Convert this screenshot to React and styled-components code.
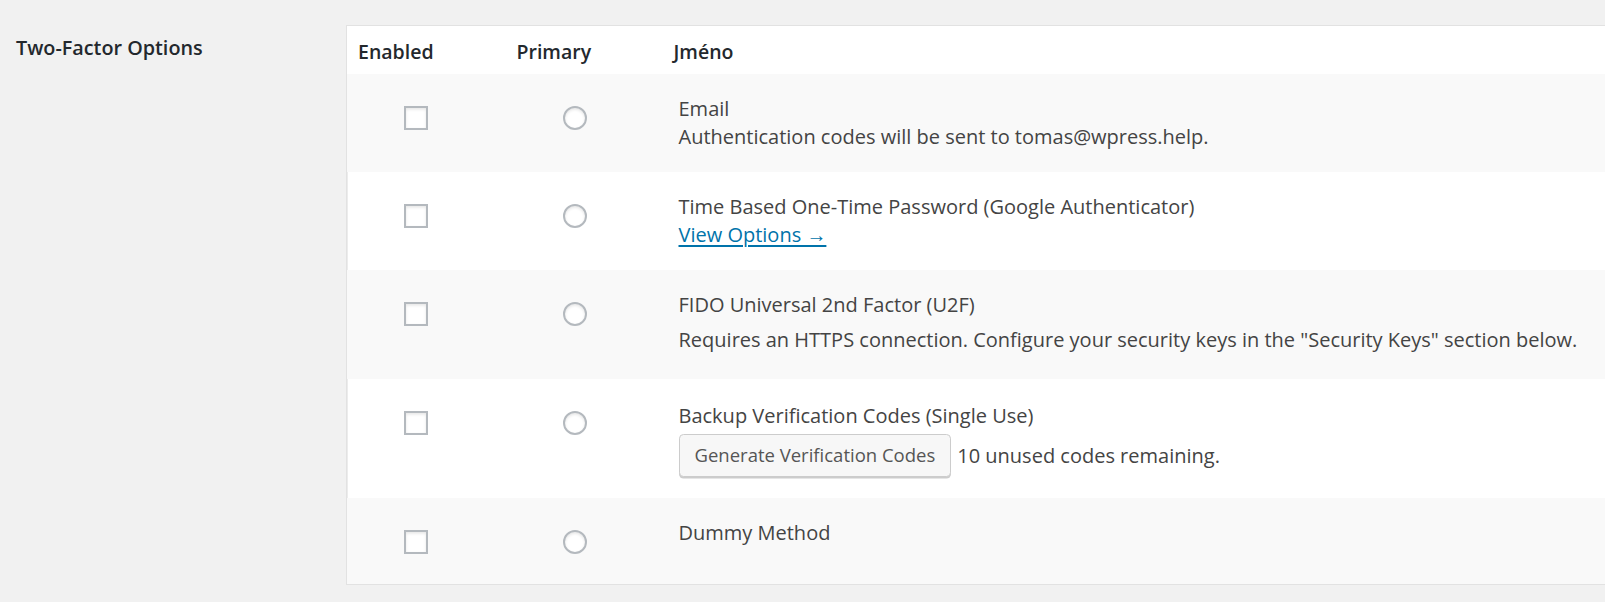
import styled, { createGlobalStyle } from "styled-components";

const methods = [
  {
    id: "email",
    name: "Email",
    lines: ["Authentication codes will be sent to tomas@wpress.help."],
  },
  {
    id: "totp",
    name: "Time Based One-Time Password (Google Authenticator)",
    link: "View Options →",
  },
  {
    id: "u2f",
    name: "FIDO Universal 2nd Factor (U2F)",
    note: 'Requires an HTTPS connection. Configure your security keys in the "Security Keys" section below.',
  },
  {
    id: "backup",
    name: "Backup Verification Codes (Single Use)",
    button: "Generate Verification Codes",
    remaining: "10 unused codes remaining.",
  },
  { id: "dummy", name: "Dummy Method" },
];

const App = () => {
  return (
    <>
      <GlobalStyle />
      <Page>
        <OptionRow>
          <OptionLabel>Two-Factor Options</OptionLabel>
          <MethodsTable>
            <colgroup>
              <col style={{ width: 159 }} />
              <col style={{ width: 157 }} />
              <col />
            </colgroup>
            <thead>
              <tr>
                <HeadCell>Enabled</HeadCell>
                <HeadCell>Primary</HeadCell>
                <HeadCell>Jméno</HeadCell>
              </tr>
            </thead>
            <tbody>
              {methods.map((m, i) => (
                <MethodRow key={m.id} $alt={i % 2 === 1}>
                  <InputCell>
                    <Checkbox type="checkbox" />
                  </InputCell>
                  <InputCell>
                    <Radio type="radio" name="primary" />
                  </InputCell>
                  <NameCell $roomy={!!m.button}>
                    <MethodName>{m.name}</MethodName>
                    {m.lines && m.lines.map((l) => <Line key={l}>{l}</Line>)}
                    {m.link && <OptionsLink href="#">{m.link}</OptionsLink>}
                    {m.note && <Note>{m.note}</Note>}
                    {m.button && (
                      <Actions>
                        <Button type="button">{m.button}</Button>
                        <Line>{m.remaining}</Line>
                      </Actions>
                    )}
                  </NameCell>
                </MethodRow>
              ))}
            </tbody>
          </MethodsTable>
        </OptionRow>
      </Page>
    </>
  );
};

export default App;

const GlobalStyle = createGlobalStyle`
  html, body {
    margin: 0;
    background: #f1f1f1;
    overflow: hidden;
  }
  body {
    font-family: "Open Sans", "Noto Sans", sans-serif;
    color: #444;
  }
`;

const Page = styled.div`
  padding-top: 25px;
  width: 1605px;
`;

const OptionRow = styled.div`
  display: flex;
  align-items: flex-start;
`;

const OptionLabel = styled.div`
  box-sizing: border-box;
  width: 346px;
  flex-shrink: 0;
  padding: 9px 0 0 16px;
  font-size: 19.8px;
  font-weight: 600;
  line-height: 27px;
  color: #23282d;
`;

const MethodsTable = styled.table`
  flex: 1;
  border-collapse: collapse;
  table-layout: fixed;
  border: 1px solid #e2e2e2;
  border-right: none;
  background: #fff;
`;

const HeadCell = styled.th`
  text-align: left;
  padding: 12px 11px 9px;
  font-size: 19.5px;
  font-weight: 600;
  line-height: 27px;
  color: #23282d;
`;

const MethodRow = styled.tr`
  background: ${(p) => (p.$alt ? "#fff" : "#f9f9f9")};
  box-shadow: ${(p) => (p.$alt ? "inset 1px 0 0 #ececec" : "none")};
`;

const InputCell = styled.td`
  vertical-align: top;
  padding: 32px 0 30px 57px;
  line-height: 0;
`;

const NameCell = styled.td`
  vertical-align: top;
  padding: ${(p) => (p.$roomy ? "23px 10px 21px 16px" : "21px 10px 21px 16px")};
  font-size: 20px;
  line-height: 28px;
`;

const MethodName = styled.div``;

const Line = styled.div``;

const Note = styled.p`
  margin: 7px 0 4px;
`;

const OptionsLink = styled.a`
  display: inline-block;
  color: #0073aa;
  text-decoration: underline;
  text-underline-offset: 3px;
`;

const Actions = styled.div`
  display: flex;
  align-items: center;
  gap: 6px;
  margin-top: 4px;
`;

const Button = styled.button`
  box-sizing: border-box;
  height: 43px;
  padding: 0 15px 2px;
  font-family: inherit;
  font-size: 18.5px;
  color: #555;
  background: #f7f7f7;
  border: 1.5px solid #ccc;
  border-radius: 4.5px;
  box-shadow: 0 1.5px 0 #ccc;
  cursor: pointer;
`;

const Checkbox = styled.input`
  appearance: none;
  box-sizing: border-box;
  width: 24px;
  height: 24px;
  margin: 0;
  background: #fff;
  border: 2px solid #b4b9be;
  box-shadow: inset 0 1.5px 3px rgba(0, 0, 0, 0.1);
`;

const Radio = styled(Checkbox)`
  border-radius: 50%;
`;
